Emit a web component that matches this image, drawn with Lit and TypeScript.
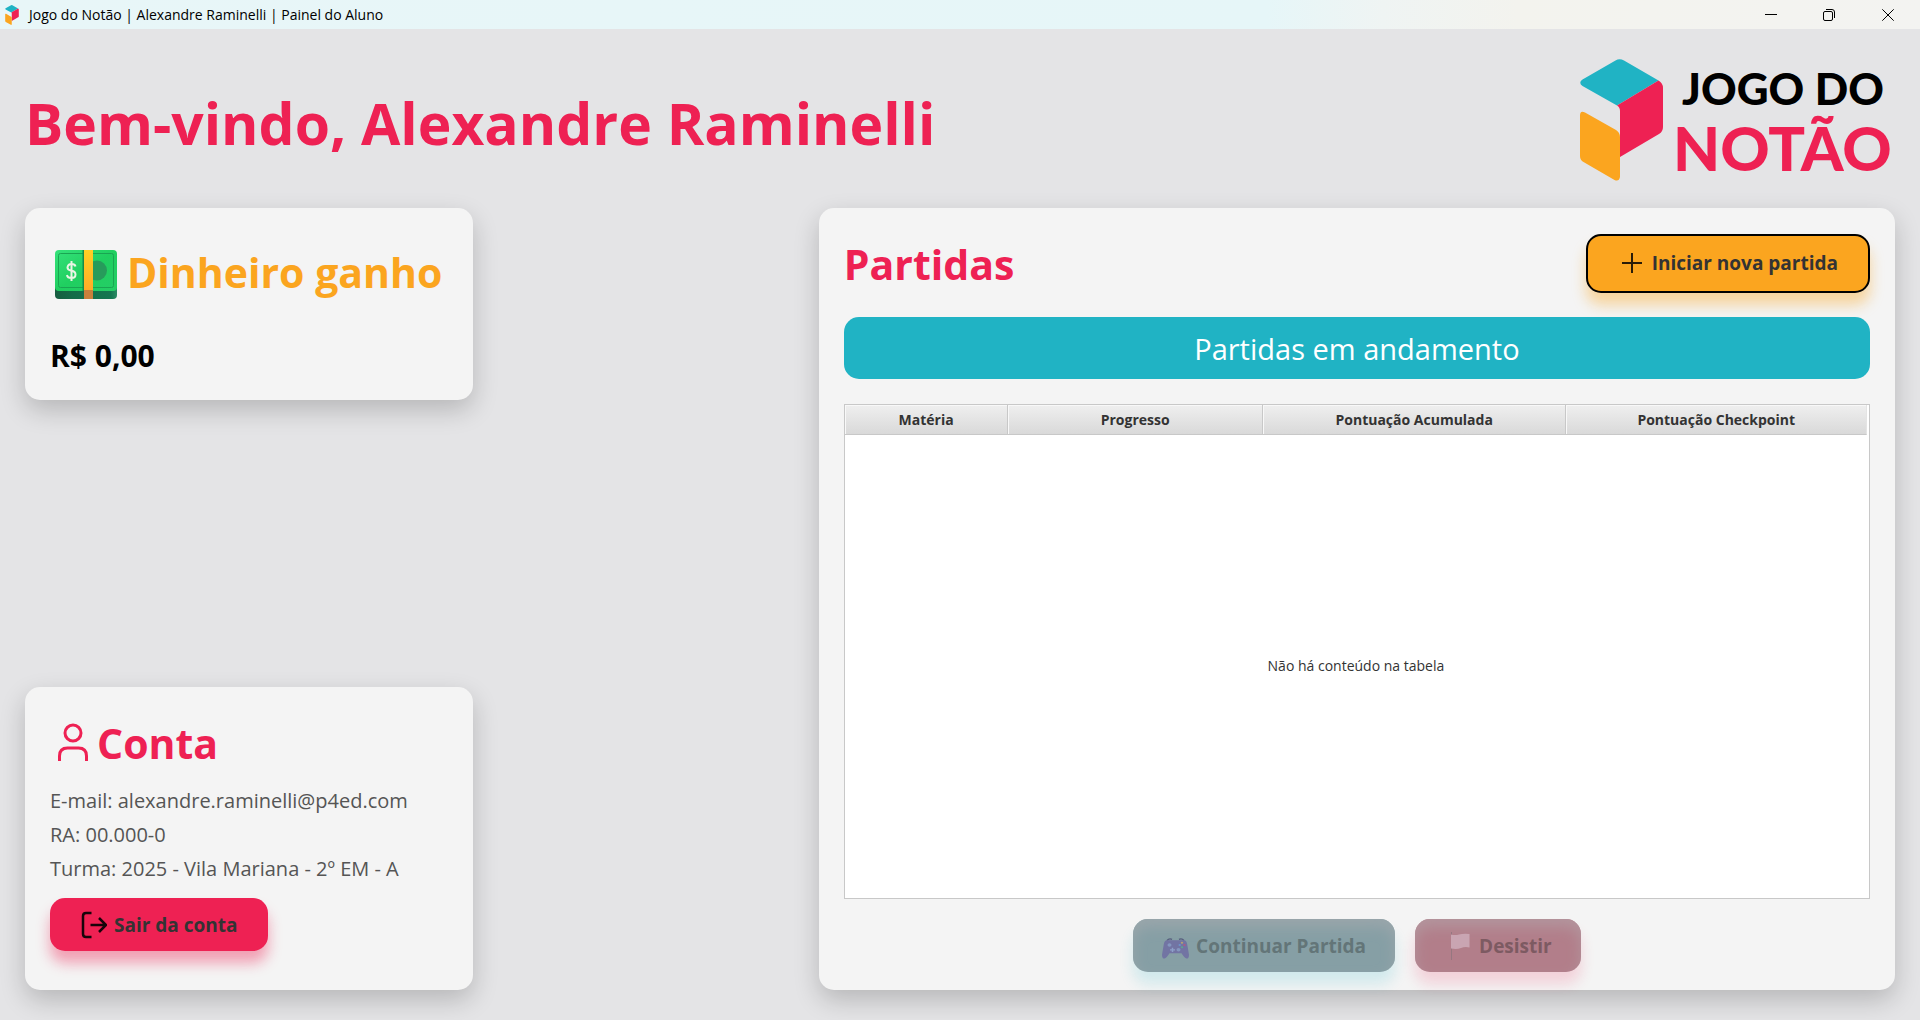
import { LitElement, html, css, svg } from "lit";
import { customElement, property } from "lit/decorators.js";

const cube = svg`
  <path fill="#20b3c4" d="M35.500 1.500Q39.500 -1 44 1.500L78.500 21.500L37 46.500L2.500 27Q-2 23.500 2.500 20.500Z"/>
  <path fill="#ee2153" d="M78.500 21.500Q83 24 83 29V68Q83 72.500 79 75L40 98V52Q40 48 37 46.500Z"/>
  <path fill="#fba51f" d="M0 56.500Q0 51 5 53.500L36 71Q40 73.500 40 78V118Q39 123 34.500 121L3.500 103Q0 101 0 97Z"/>
`;

@customElement("window-bar")
export class WindowBar extends LitElement {
  @property() label = "";

  static styles = css`
    :host {
      display: flex;
      align-items: center;
      height: 29px;
      padding: 0 2px 0 5px;
      background: linear-gradient(90deg, #e8f6f8 0%, #e6f6f8 66%, #eff4f3 72%, #f3f3ee 79%, #f3f3f1 100%);
      color: #000;
      font-size: 14px;
    }
    .mark {
      width: 14px;
      height: 20px;
      margin-right: 10px;
    }
    .label {
      flex: 1;
    }
    .control {
      display: flex;
      align-items: center;
      justify-content: center;
      width: 58px;
      height: 29px;
      padding: 0;
      border: 0;
      background: none;
    }
    .control:last-child {
      width: 60px;
    }
    .glyph {
      width: 12px;
      height: 12px;
      fill: none;
      stroke: #000;
    }
  `;

  render() {
    return html`
      <svg class="mark" viewBox="0 0 83 122" aria-hidden="true">${cube}</svg>
      <span class="label">${this.label}</span>
      <button class="control" aria-label="Minimizar">
        <svg class="glyph" viewBox="0 0 12 12"><path d="M0 5.500H12" /></svg>
      </button>
      <button class="control" aria-label="Restaurar">
        <svg class="glyph" viewBox="0 0 12 12">
          <rect x="0.500" y="2.500" width="9" height="9" rx="1.500" />
          <path d="M3 .500H9Q11.500 .500 11.500 3V9" />
        </svg>
      </button>
      <button class="control" aria-label="Fechar">
        <svg class="glyph" viewBox="0 0 12 12"><path d="M.300 .300L11.700 11.700M11.700 .300L.300 11.700" /></svg>
      </button>
    `;
  }
}

interface Column {
  title: string;
  width: string;
}

@customElement("app-root")
export class AppRoot extends LitElement {
  private columns: Column[] = [
    { title: "Matéria", width: "16%" },
    { title: "Progresso", width: "24.900%" },
    { title: "Pontuação Acumulada", width: "29.700%" },
    { title: "Pontuação Checkpoint", width: "29.400%" },
  ];

  static styles = css`
    :host {
      display: flex;
      flex-direction: column;
      min-height: 100vh;
      background: #e4e4e6;
      color: #333;
      font-family: "Open Sans", "Noto Sans", sans-serif;
    }
    * {
      box-sizing: border-box;
    }
    h1,
    h2,
    h3,
    p {
      margin: 0;
    }
    .top {
      display: flex;
      align-items: center;
      justify-content: space-between;
      padding: 28px 26px 19px 25px;
    }
    h1 {
      color: #ee2153;
      font-size: 57px;
      line-height: 72px;
      white-space: nowrap;
    }
    .logo {
      width: 314px;
      height: 132px;
      font-family: Lato, sans-serif;
      font-weight: 900;
    }
    .main {
      flex: 1;
      display: flex;
      justify-content: space-between;
      padding: 0 25px 30px;
    }
    .side {
      display: flex;
      flex-direction: column;
      justify-content: space-between;
      gap: 40px;
      width: 448px;
    }
    .card {
      border-radius: 15px;
      background: #f4f4f4;
      box-shadow: 0 10px 26px rgba(0, 0, 0, 0.2);
      padding: 25px;
    }
    h2 {
      padding-top: 2px;
      color: #ee2153;
      font-size: 41px;
      line-height: 58px;
      white-space: nowrap;
    }
    .heading {
      display: flex;
      align-items: center;
    }
    .money {
      padding-bottom: 24px;
    }
    .money .heading {
      padding: 8px 0 35px 5px;
      gap: 10px;
    }
    .money h2 {
      color: #fba51f;
    }
    .amount {
      color: #000;
      font-size: 30px;
      font-weight: 700;
      line-height: 40px;
    }
    .bills {
      flex: none;
      width: 62px;
      height: 49px;
      margin-top: 6px;
    }
    .account .heading {
      gap: 9px;
      padding: 0 0 12px 8px;
    }
    .account {
      padding-bottom: 39px;
    }
    .person {
      width: 30px;
      height: 38px;
      fill: none;
      stroke: #ee2153;
      stroke-width: 3;
    }
    .line {
      color: #555;
      font-size: 20px;
      line-height: 34px;
      white-space: nowrap;
    }
    .btn {
      display: inline-flex;
      align-items: center;
      justify-content: center;
      height: 53px;
      padding: 0 29px;
      gap: 7px;
      border: 0;
      border-radius: 15px;
      color: #333;
      font: 700 19px/26px "Open Sans", "Noto Sans", sans-serif;
      white-space: nowrap;
    }
    .leave {
      margin-top: 12px;
      padding: 0 31px;
      background: #ee2153;
      box-shadow: 0 12px 14px rgba(238, 33, 83, 0.4);
    }
    .exit {
      width: 26px;
      height: 28px;
      fill: none;
      stroke: #16040a;
      stroke-width: 2.500;
    }
    .games {
      display: flex;
      flex-direction: column;
      flex: 0 0 57.550%;
      padding: 25px 25px 18px;
    }
    .games .bar {
      display: flex;
      align-items: center;
      justify-content: space-between;
    }
    .start {
      height: 59px;
      padding: 0 30px 0 34px;
      gap: 10px;
      border: 2px solid #000;
      background: #fba51f;
      box-shadow: 0 12px 14px rgba(251, 165, 31, 0.4);
    }
    .plus {
      width: 20px;
      height: 20px;
      fill: none;
      stroke: #2a1c08;
      stroke-width: 2;
    }
    .banner {
      margin: 24px 0 25px;
      padding: 11px 10px 9px;
      border-radius: 15px;
      background: #20b3c4;
      color: #fff;
      font-size: 29px;
      font-weight: 400;
      line-height: 42px;
      text-align: center;
    }
    .frame {
      flex: 1;
      display: grid;
      border: 1px solid #c8c8c8;
      background: #fff;
      padding-right: 2px;
    }
    table {
      width: 100%;
      height: 100%;
      border-collapse: separate;
      border-spacing: 0;
      table-layout: fixed;
      font-size: 14px;
    }
    th {
      height: 30px;
      padding: 0;
      border-right: 1px solid #c8c8c8;
      border-bottom: 1px solid #c8c8c8;
      background: linear-gradient(#efefef, #d9d9d9);
      box-shadow: inset 1px 1px #f8f8f8;
      line-height: 20px;
    }
    th:last-child {
      border-right-color: #e4e4e4;
    }
    td {
      padding: 0 0 3px;
      text-align: center;
    }
    .actions {
      display: flex;
      justify-content: center;
      gap: 20px;
      padding-top: 20px;
    }
    .continue {
      background: #869fa5;
      color: #637578;
      box-shadow: inset 0 8px 14px #9aa6ab, 0 12px 14px rgba(32, 179, 196, 0.16);
    }
    .quit {
      background: #b27e8a;
      color: #7d5a62;
      box-shadow: inset 0 8px 14px #b3959d, 0 12px 14px rgba(238, 33, 83, 0.16);
    }
    .pad {
      width: 27px;
      height: 21px;
      margin-top: 5px;
    }
    .flag {
      width: 20px;
      height: 28px;
      margin: 0 2px 0 6px;
    }
  `;

  private bills() {
    return html`
      <svg class="bills" viewBox="0 0 62 49" aria-hidden="true">
        <defs>
          <linearGradient id="note" x2="1" y2="1">
            <stop stop-color="#35e27a" />
            <stop offset="0.500" stop-color="#20cf60" />
            <stop offset="1" stop-color="#25cd66" />
          </linearGradient>
          <linearGradient id="side">
            <stop stop-color="#175c40" />
            <stop offset="0.300" stop-color="#136c48" />
            <stop offset="0.900" stop-color="#147650" />
            <stop offset="1" stop-color="#2a8a64" />
          </linearGradient>
          <linearGradient id="band" x2="0" y2="1">
            <stop stop-color="#ffd024" />
            <stop offset="1" stop-color="#ffab28" />
          </linearGradient>
        </defs>
        <rect y="20" width="62" height="29" rx="4" fill="url(#side)" />
        <rect width="62" height="41" rx="4" fill="url(#note)" />
        <rect x="3.500" y="3.500" width="55" height="34" rx="2" fill="none" stroke="#19a552" />
        <circle cx="42" cy="20.500" r="10" fill="#279b5b" />
        <rect x="27.500" width="2" height="41" fill="#168a4a" />
        <rect x="29" width="9" height="41" fill="url(#band)" />
        <rect x="29" y="40" width="9" height="9" fill="#c9803c" />
        <path
          d="M20.500 16.500Q20 14 16.500 14T12.500 17.500Q12.500 20 16.500 20.700T20.500 24.500Q20.500 28 16.500 28T12 25M16.500 11V31"
          fill="none"
          stroke="#eaf5e5"
          stroke-width="2"
        />
      </svg>
    `;
  }

  render() {
    return html`
      <window-bar label="Jogo do Notão | Alexandre Raminelli | Painel do Aluno"></window-bar>
      <header class="top">
        <h1>Bem-vindo, Alexandre Raminelli</h1>
        <svg class="logo" viewBox="0 -2 314 132" role="img" aria-label="Jogo do Notão">
          ${cube}
          <text x="102" y="46" font-size="44" fill="#000">JOGO DO</text>
          <text x="93" y="112" font-size="61" fill="#ee2153">NOTÃO</text>
        </svg>
      </header>
      <main class="main">
        <div class="side">
          <section class="card money">
            <div class="heading">
              ${this.bills()}
              <h2>Dinheiro ganho</h2>
            </div>
            <p class="amount">R$ 0,00</p>
          </section>
          <section class="card account">
            <div class="heading">
              <svg class="person" viewBox="0 0 30 38" aria-hidden="true">
                <circle cx="15" cy="10" r="8" />
                <path d="M1.500 38V33Q1.500 25 9.500 25H20.500Q28.500 25 28.500 33V38" />
              </svg>
              <h2>Conta</h2>
            </div>
            <p class="line">E-mail: alexandre.raminelli@p4ed.com</p>
            <p class="line">RA: 00.000-0</p>
            <p class="line">Turma: 2025 - Vila Mariana - 2º EM - A</p>
            <button class="btn leave">
              <svg class="exit" viewBox="0 0 26 28" aria-hidden="true">
                <path d="M10.500 2H5Q2 2 2 5V23Q2 26 5 26H10.500M9.500 14H25M18 7L25 14L18 21" />
              </svg>
              Sair da conta
            </button>
          </section>
        </div>
        <section class="card games">
          <div class="bar">
            <h2>Partidas</h2>
            <button class="btn start">
              <svg class="plus" viewBox="0 0 20 20" aria-hidden="true"><path d="M10 0V20M0 10H20" /></svg>
              Iniciar nova partida
            </button>
          </div>
          <h3 class="banner">Partidas em andamento</h3>
          <div class="frame">
            <table>
              <colgroup>
                ${this.columns.map((c) => html`<col style="width:${c.width}" />`)}
              </colgroup>
              <thead>
                <tr>
                  ${this.columns.map((c) => html`<th scope="col">${c.title}</th>`)}
                </tr>
              </thead>
              <tbody>
                <tr>
                  <td colspan="4">Não há conteúdo na tabela</td>
                </tr>
              </tbody>
            </table>
          </div>
          <div class="actions">
            <button class="btn continue" disabled>
              <svg class="pad" viewBox="0 0 27 24" preserveAspectRatio="none" aria-hidden="true">
                <path d="M5 3Q7 0 10 1.500M17 1.500Q20 0 22 3" fill="none" stroke="#555a7c" stroke-width="1.500" />
                <path
                  d="M5 2.500H22Q24.500 2.500 25.200 7L27 19Q27 23.500 24.500 23.500Q22.500 23 19.500 17.500H7.500Q4.500 23 2.500 23.500Q0 23.500 0 19L1.800 7Q2.500 2.500 5 2.500Z"
                  fill="#7274a3"
                />
                <circle cx="7.500" cy="8" r="2" fill="#8597bf" />
                <circle cx="16.500" cy="13.500" r="2" fill="#8597bf" />
                <path d="M8 13.500H13M10.500 11V16" stroke="#8ea0c9" stroke-width="1.500" />
                <circle cx="20" cy="5.500" r="1.200" fill="#b3a172" />
                <circle cx="22.500" cy="8" r="1.200" fill="#b05a86" />
                <circle cx="20" cy="10.500" r="1.200" fill="#5fa58f" />
                <circle cx="17.700" cy="8" r="1.200" fill="#6c94cc" />
              </svg>
              Continuar Partida
            </button>
            <button class="btn quit" disabled>
              <svg class="flag" viewBox="0 0 20 28" aria-hidden="true">
                <path d="M1.500 0V28" stroke="#967780" stroke-width="1" />
                <path d="M1 2.500Q5 3.500 9 2.500T19.500 2V15.500Q15 14.500 11 16T1 16.500Z" fill="#c9a5b2" />
              </svg>
              Desistir
            </button>
          </div>
        </section>
      </main>
    `;
  }
}
